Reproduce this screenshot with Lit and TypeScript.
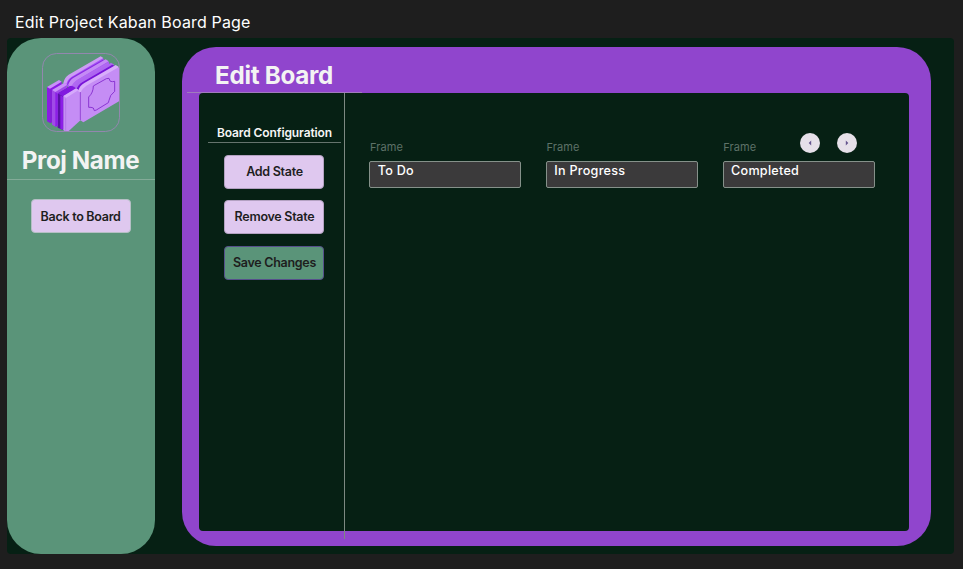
import { LitElement, html, css } from "lit";
import { customElement, property } from "lit/decorators.js";

@customElement("ticket-logo")
class TicketLogo extends LitElement {
  static styles = css`
    :host { display: block; width: 78px; height: 79px; }
    svg { display: block; width: 78px; height: 79px; }
  `;
  render() {
    return html`<svg viewBox="18 15 234 237" fill="none">
      <defs><clipPath id="frame"><rect x="19" y="16" width="230" height="236" rx="40" /></clipPath></defs>
      <g>
        <path fill="#a855f7" d="M82 110Q86 92 98 84L196 28L203 33V60L110 122Z" />
        <path fill="#cd9cf5" d="M82 105Q86 87 98 80L194 25L202 30L106 87Q94 95 90 111Z" />
        <path fill="#8a2be2" d="M93 110Q98 94 108 88L203 34V43L112 96Q102 103 99 114Z" />
        <path fill="#a55af0" d="M98 116Q104 98 115 91L209 36L219 42V62L120 124Z" />
        <path fill="#c48bf5" d="M96 112Q101 96 113 89L209 34L218 40L125 95Q112 103 108 118Z" />
        <path fill="#b168f2" d="M105 116Q112 103 123 96L218 42V50L132 103L120 125Z" />
        <path fill="#ad67f0" d="M112 120Q120 106 132 98L225 44L235 50L140 105Q130 111 126 124Z" />
        <path fill="#7814d8" d="M120 128Q125 110 140 102L229 50L236 54V66L140 121L132 135Z" />
        <path fill="#8b1be6" d="M33 118L70 98L77 102V200L43 226L33 220Z" />
        <path fill="#c991f8" d="M33 117L69 96L77 101L42 122Z" />
        <path fill="#a04be7" d="M48 128L86 105L93 111V210L60 237L48 230Z" />
        <path fill="#8420d8" d="M42 122L48 128V222L42 226Z" />
        <path fill="#c991f8" d="M48 126L85 104L94 110L58 132Z" />
        <path fill="#5912a5" d="M65 137L104 114L114 118V222L80 245L65 239Z" />
        <path fill="#8c1ee7" d="M58 132L65 137V233L58 237ZM73 142L82 147V245L73 242Z" />
        <path fill="#8119df" d="M65 136L105 113Q114 115 122 122L82 146Z" />
        <path fill="#c58df5" d="M82 145L122 122L135 133V215L99 248Q90 255 82 246Z" />
        <path fill="#d5aafb" d="M82 144L120 121L128 126L91 149Z" />
        <path fill="#c58df5" d="M133 134Q139 117 151 110L243 56L249 59V160L142 223L133 217Z" />
        <path fill="#d8aefa" d="M126 129Q131 113 145 105L239 51L249 57L151 113Q139 121 133 135Z" />
        <path stroke="#8c38d0" stroke-width="2.5" d="M133 132V216" />
        <path stroke="#a665df" stroke-width="1.5" d="M89 151V248" />
        <path stroke="#8127cc" stroke-width="2.6" stroke-linejoin="round" d="M177 111L211 92L219 91Q221 103 229 101L236 100V130Q221 141 219 157L217 164L181 186L175 188Q174 177 165 178L158 178V147Q172 134 172 114Z" />
      </g>
      <rect x="19.5" y="16.5" width="231" height="234" rx="42" stroke="#9287ae" stroke-width="3" />
    </svg>`;
  }
}

@customElement("state-field")
class StateField extends LitElement {
  @property() name = "";
  static styles = css`
    :host { display: block; width: 152px; }
    .label { height: 20px; font: 400 11px/13px Inter, sans-serif; letter-spacing: 0.1px; color: #5e7268; padding-left: 0.5px; box-sizing: border-box; }
    .box { height: 27.4px; box-sizing: border-box; border: 1px solid #85918a; border-radius: 2px; background: #3b3a3b; color: #fff; padding: 0 7.3px; font: 500 12.6px/18px Inter, sans-serif; letter-spacing: 0.26px; white-space: nowrap; }
  `;
  render() {
    return html`<div class="label">Frame</div><div class="box">${this.name}</div>`;
  }
}

@customElement("app-root")
class AppRoot extends LitElement {
  static styles = css`
    :host { display: block; width: 963px; height: 569px; overflow: hidden; background: #1e1e1e; font-family: Inter, sans-serif; }
    * { box-sizing: border-box; }
    .caption { height: 38px; padding: 12px 0 0 15px; font-size: 16px; line-height: 20px; color: #fff; white-space: nowrap; letter-spacing: 0.16px; }
    .page { display: flex; width: 947px; height: 516px; margin-left: 7px; background: #062014; border-radius: 4px; }
    .sidebar { width: 148px; height: 516px; border-radius: 34px; background: #5a9479; display: flex; flex-direction: column; align-items: center; padding-top: 15px; }
    .project { width: 100%; height: 48px; border-bottom: 1px solid #83ab98; text-align: center; font-weight: 700; font-size: 24.2px; line-height: 57px; color: #f3f3f3; white-space: nowrap; letter-spacing: -0.4px; padding-right: 1px; }
    button { display: block; width: 100px; height: 34px; padding: 0; border: 1px solid #b3a1c1; border-radius: 4px; background: #dfc8ef; color: #1e1e1e; font: 600 12.5px/32px Inter, sans-serif; letter-spacing: -0.28px; white-space: nowrap; }
    .back { margin: 19.4px 0.8px 0 0; border-color: #b5bfc5; line-height: 33px; }
    .save { background: #5a9479; border-color: #55508b; margin-top: 1px; }
    .board { width: 749px; height: 499px; margin: 9px 0 0 27.4px; border-radius: 34px; background: #9045cd; padding: 0 0 0 4.6px; }
    .heading { width: 175px; height: 46px; border-bottom: 1px solid #a07bbd; padding-left: 28px; font-size: 24.2px; line-height: 57px; font-weight: 700; color: #f3f3f3; white-space: nowrap; letter-spacing: -0.27px; }
    .content { display: flex; width: 709.6px; height: 437.5px; margin-left: 12px; border-radius: 4px; background: #062014; }
    .config { width: 146px; height: 446px; border-right: 1px solid #7d8982; display: flex; flex-direction: column; align-items: center; padding: 31px 3px 0 9px; flex: none; }
    .config-title { width: 133px; height: 19px; border-bottom: 1px solid #65746d; text-align: center; font-size: 12px; line-height: 17px; font-weight: 600; color: #f5f5f5; white-space: nowrap; letter-spacing: -0.1px; }
    .actions { display: flex; flex-direction: column; gap: 11px; margin: 11.6px 0 0 0; }
    .states { width: 506px; margin: 40px 0 0 24.4px; flex: none; }
    .pager { height: 20px; display: flex; justify-content: flex-end; gap: 17px; padding-right: 18.2px; }
    .pager svg { display: block; width: 20px; height: 20px; }
    .fields { display: flex; gap: 24.7px; margin-top: -12px; }
  `;
  private states = ["To Do", "In Progress", "Completed"];
  render() {
    return html`
      <div class="caption">Edit Project Kaban Board Page</div>
      <main class="page">
        <aside class="sidebar">
          <ticket-logo></ticket-logo>
          <div class="project">Proj Name</div>
          <button class="back">Back to Board</button>
        </aside>
        <section class="board">
          <div class="heading">Edit Board</div>
          <div class="content">
            <div class="config">
              <div class="config-title">Board Configuration</div>
              <div class="actions">
                <button>Add State</button>
                <button>Remove State</button>
                <button class="save">Save Changes</button>
              </div>
            </div>
            <div class="states">
              <div class="pager">
                <svg viewBox="0 0 20 20"><circle cx="10" cy="10" r="10" fill="#e6e0e9" /><path d="M11.2 7.5V12.5L8.7 10Z" fill="#65558f" /></svg>
                <svg viewBox="0 0 20 20"><circle cx="10" cy="10" r="10" fill="#e6e0e9" /><path d="M8.8 7.5V12.5L11.3 10Z" fill="#65558f" /></svg>
              </div>
              <div class="fields">${this.states.map((s) => html`<state-field .name=${s}></state-field>`)}</div>
            </div>
          </div>
        </section>
      </main>`;
  }
}
